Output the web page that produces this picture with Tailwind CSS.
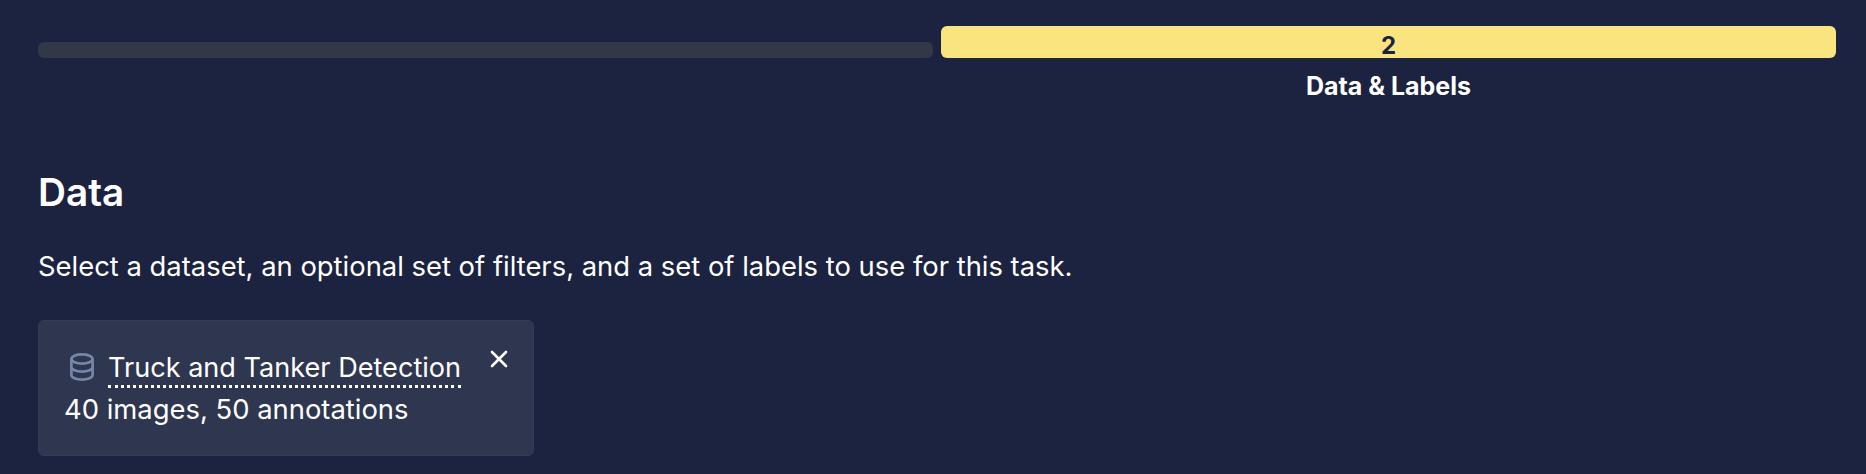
<!DOCTYPE html>
<html lang="en">
<head>
  <meta charset="UTF-8">
  <title>Data &amp; Labels</title>
  <script src="https://cdn.jsdelivr.net/npm/@tailwindcss/browser@4"></script>
</head>
<body class="bg-[#1b2340] text-white font-[Inter,sans-serif] h-[474px] overflow-hidden">
  <div class="pl-[38px] pr-[30px] pt-[26px]">
    <!-- Steps -->
    <div class="flex gap-2">
      <div class="flex-1">
        <div class="h-8 flex items-end">
          <div class="w-full h-4 rounded-md bg-[#333849]"></div>
        </div>
      </div>
      <div class="flex-1">
        <div class="h-8 rounded-md bg-[#fae480] text-[#1b2340] text-[24px] font-bold text-center leading-[40px]">2</div>
        <div class="mt-[13px] text-[25px] font-bold text-center leading-[30px]">Data &amp; Labels</div>
      </div>
    </div>

    <!-- Data -->
    <h2 class="mt-[67px] text-[38.7px] font-semibold leading-[48px]">Data</h2>
    <p class="mt-[34px] text-[27.4px] leading-8">Select a dataset, an optional set of filters, and a set of labels to use for this task.</p>

    <!-- Dataset card -->
    <div class="relative mt-[38px] w-[496px] h-[136px] rounded-md bg-[#2f3750] border border-[#343c55] pl-[25px] pt-[29px]">
      <div class="flex items-center gap-[14px] pl-[6px]">
        <svg class="w-6 h-7 mb-1 text-[#7686a8]" fill="none" viewBox="0 0 24 28" stroke-width="2.7" stroke="currentColor">
          <ellipse cx="12" cy="6" rx="10.6" ry="4.6"/>
          <path d="M1.4 6V22C1.4 24.5 6 26.6 12 26.6S22.6 24.5 22.6 22V6"/>
          <path d="M1.4 14C1.4 16.5 6 18.6 12 18.6S22.6 16.5 22.6 14"/>
        </svg>
        <span class="text-[27.1px] leading-[35px] border-b-[3px] border-dotted border-white">Truck and Tanker Detection</span>
      </div>
      <div class="text-[27.4px] leading-9 mt-[3px]">40 images, 50 annotations</div>
      <svg class="absolute right-[24px] top-[28px] w-[20px] h-[20px] text-white" fill="none" viewBox="0 0 20 20" stroke-width="2.6" stroke="currentColor">
        <path stroke-linecap="round" stroke-linejoin="round" d="M3 3l14 14M17 3L3 17"/>
      </svg>
    </div>
  </div>
</body>
</html>
